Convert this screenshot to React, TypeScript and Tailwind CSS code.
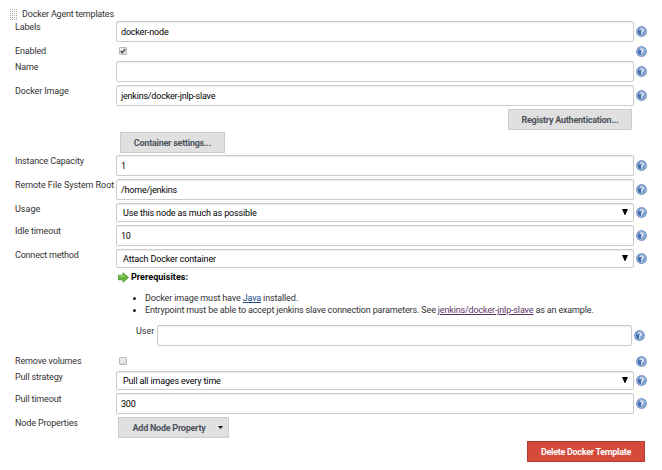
import React from "react";

function Help() {
  return (
    <svg className="ml-[2px] block h-[11px] w-[11px] shrink-0" viewBox="0 0 11 11">
      <circle cx="5.5" cy="5.5" r="5.4" fill="#6c8fc2" />
      <circle cx="5.5" cy="5.5" r="4.2" fill="#3f6dae" stroke="#b4c7e2" strokeWidth="0.8" />
      <path d="M5.5 1.6A3.9 3.9 0 0 1 5.5 9.4Z" fill="#7fa0d0" />
      <path d="M3.8 4.3C3.8 2.3 7.3 2.3 7.3 4.2C7.3 5.4 5.6 5.3 5.6 6.7" fill="none" stroke="#fff" strokeWidth="1.2" />
      <rect x="5" y="7.4" width="1.2" height="1.2" fill="#fff" />
    </svg>
  );
}

interface RowProps {
  label: string;
  className: string;
  labelClass?: string;
  children?: React.ReactNode;
  help?: boolean;
}

function Row({ label, className, labelClass = "", children, help = true }: RowProps) {
  return (
    <div className={`flex items-start ${className}`}>
      <div className={`w-[101px] shrink-0 whitespace-nowrap ${labelClass}`}>{label}</div>
      <div className="flex w-[533px] items-center">
        <div className="flex w-[518px] shrink-0 items-center">{children}</div>
        {help && <Help />}
      </div>
    </div>
  );
}

function CheckRow({ label, checked = false }: { label: string; checked?: boolean }) {
  return (
    <div className="flex h-4 items-start">
      <div className="w-[101px] shrink-0">{label}</div>
      <div className="flex w-[518px] shrink-0 pt-[2px]"><Check checked={checked} /></div>
      <div className="pt-px"><Help /></div>
    </div>
  );
}

function Field({ value = "" }: { value?: string }) {
  return (
    <div className="flex h-[21px] w-full items-center rounded-[2px] border border-[#ccc] bg-white pl-1 tracking-[-0.2px] text-black shadow-[inset_0_1px_1px_rgba(0,0,0,0.075)]">
      {value}
    </div>
  );
}

function Select({ value }: { value: string }) {
  return (
    <div className="flex h-[19px] w-full items-center justify-between rounded-[2px] border border-[#ccc] bg-white pr-[5px] pl-[6px] tracking-[-0.15px] text-black shadow-[inset_0_1px_1px_rgba(0,0,0,0.075)]">
      <span>{value}</span>
      <svg className="mb-[2px] h-[6px] w-[6px]" viewBox="0 0 6 6">
        <path d="M0 0H6L3.4 6H2.6Z" fill="#000" />
      </svg>
    </div>
  );
}

function Check({ checked = false }: { checked?: boolean }) {
  return (
    <span className="ml-[3px] flex h-2 w-2 items-center justify-center rounded-[1px] border border-[#b8b8b8] bg-linear-to-b from-[#eee] to-[#ddd]">
      {checked && (
        <svg className="h-[6px] w-[6px]" viewBox="0 0 6 6">
          <path d="M0.7 3L2.3 4.7L5.3 1" fill="none" stroke="#444" strokeWidth="1.3" />
        </svg>
      )}
    </span>
  );
}

const button = "flex h-[21px] items-center justify-center border border-[#ccc] bg-[#e0e0e0] font-bold tracking-[-0.24px] text-[#4d545d] whitespace-nowrap";

export default function App() {
  return (
    <div className="h-[470px] w-[662px] overflow-hidden bg-white pt-2 pl-[9px] font-['Roboto','Liberation_Sans',sans-serif] text-[9px] leading-[12px] tracking-[-0.15px] text-[#333]">
      <div className="flex h-[13px] items-start">
        <svg className="mt-px h-[11px] w-[8px]" viewBox="0 0 8 11">
          <defs>
            <pattern id="grip" width="2" height="2" patternUnits="userSpaceOnUse">
              <rect x="1" width="1" height="1" fill="#aaa" />
            </pattern>
          </defs>
          <rect width="8" height="11" fill="url(#grip)" />
        </svg>
        <span className="ml-[5px] tracking-[-0.2px]">Docker Agent templates</span>
      </div>
      <div className="pl-[6px]">
        <Row label="Labels" className="h-6"><Field value="docker-node" /></Row>
        <CheckRow label="Enabled" checked />
        <Row label="Name" className="h-6"><Field /></Row>
        <Row label="Docker Image" className="h-6"><Field value="jenkins/docker-jnlp-slave" /></Row>
        <div className="flex h-[23px] w-[617px] justify-end">
          <div className={`w-[124px] ${button}`}>Registry Authentication...</div>
        </div>
        <div className="h-[23px] pl-[105px]">
          <div className={`w-[105px] ${button}`}>Container settings...</div>
        </div>
        <Row label="Instance Capacity" className="h-6"><Field value="1" /></Row>
        <Row label="Remote File System Root" className="h-6" labelClass="tracking-[-0.06px]"><Field value="/home/jenkins" /></Row>
        <Row label="Usage" className="h-[22px]" labelClass="tracking-normal"><Select value="Use this node as much as possible" /></Row>
        <Row label="Idle timeout" className="h-6"><Field value="10" /></Row>
        <Row label="Connect method" className="h-[22px]" labelClass="tracking-[-0.2px]"><Select value="Attach Docker container" /></Row>
        <div className="flex h-[21px] items-start pl-[103px] font-bold tracking-[0.04px] text-black">
          <svg className="mt-px h-[11px] w-[11px]" viewBox="0 0 11 11">
            <path d="M0.5 3.2H5V0.7L10.5 5.5L5 10.3V7.8H0.5Z" fill="#65b635" stroke="#4c8e30" strokeWidth="0.8" />
            <path d="M1.2 4.2H5.8V2.6" fill="none" stroke="#a7dc7f" />
          </svg>
          <span className="ml-[2px]">Prerequisites:</span>
        </div>
        <ul className="h-[33px] pl-[118px]">
          <li className="flex items-center"><span className="mr-[9px] h-[3px] w-[3px] rounded-full bg-[#222]" />
            <span>Docker image must have <a className="text-[#204a87] underline">Java</a> installed.</span>
          </li>
          <li className="flex items-center"><span className="mr-[9px] h-[3px] w-[3px] rounded-full bg-[#222]" />
            <span>Entrypoint must be able to accept jenkins slave connection parameters. See <a className="text-[#5c3566] underline">jenkins/docker-jnlp-slave</a> as an example.</span>
          </li>
        </ul>
        <div className="flex h-[30px] items-start pl-[121px]">
          <span className="w-[21px] tracking-normal">User</span>
          <div className="flex items-center">
            <div className="w-[475px]"><Field /></div>
            <Help />
          </div>
        </div>
        <CheckRow label="Remove volumes" />
        <Row label="Pull strategy" className="h-[22px]"><Select value="Pull all images every time" /></Row>
        <Row label="Pull timeout" className="h-6"><Field value="300" /></Row>
        <Row label="Node Properties" className="h-6" help={false}>
          <div className={`ml-[2px] w-[111px] pl-2 ${button}`}>
            <span>Add Node Property</span>
            <svg className="ml-3 h-[3px] w-[5px]" viewBox="0 0 5 3"><path d="M0 0H5L2.5 3Z" fill="#111" /></svg>
          </div>
        </Row>
        <div className="flex w-[630px] justify-end">
          <div className="flex h-[21px] w-[118px] items-center justify-center border border-[#b43c2e] bg-[#d44b3b] font-bold tracking-[-0.3px] text-white">Delete Docker Template</div>
        </div>
      </div>
    </div>
  );
}
